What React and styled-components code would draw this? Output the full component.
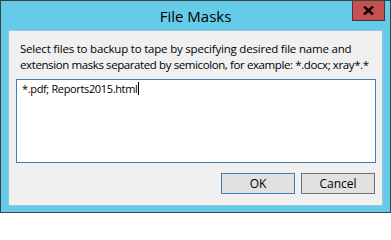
import React from 'react';
import styled, { createGlobalStyle } from 'styled-components';

const GlobalStyle = createGlobalStyle`
  html, body {
    margin: 0;
    padding: 0;
    background: #ffffff;
  }
  body {
    font-family: "Open Sans", "Noto Sans", sans-serif;
  }
`;

const Window = styled.div`
  box-sizing: border-box;
  width: 391px;
  height: 213px;
  background: #65cbe9;
  border: 1px solid #3d4446;
  display: flex;
  flex-direction: column;
  padding: 0 7px 6px 7px;
  overflow: hidden;
`;

const TitleBar = styled.div`
  position: relative;
  height: 29px;
  display: flex;
  align-items: center;
  justify-content: center;
  flex-shrink: 0;
`;

const Title = styled.span`
  font-size: 15px;
  color: #000;
  padding-top: 1px;
`;

const CloseButton = styled.div`
  position: absolute;
  top: -1px;
  right: -2px;
  width: 31px;
  height: 20px;
  background: #c75050;
  border: 1px solid #4a3535;
  border-top: none;
  display: flex;
  align-items: center;
  justify-content: center;
`;

const Panel = styled.div`
  flex: 1;
  min-height: 0;
  background: #f0f0f0;
  border: 1px solid #9ac4dc;
  display: flex;
  flex-direction: column;
  padding: 0 6px 11px 7px;
`;

const Prompt = styled.div`
  margin-top: 10px;
  padding-left: 4px;
  display: flex;
  flex-direction: column;
`;

const PromptLine = styled.span`
  font-size: 11.5px;
  line-height: 16px;
  color: #000;
  white-space: nowrap;
  letter-spacing: ${p => p.$tracking}px;
`;

const MaskInput = styled.div`
  box-sizing: border-box;
  margin-top: 6px;
  height: 84px;
  flex-shrink: 0;
  background: #fff;
  border: 1px solid #3f7fb3;
  padding: 1px 5px;
  font-size: 11px;
  line-height: 16px;
  color: #000;
  letter-spacing: -0.35px;
`;

const Caret = styled.span`
  display: inline-block;
  width: 1px;
  height: 13px;
  background: #000;
  vertical-align: -2px;
  margin-left: 1px;
`;

const ButtonRow = styled.div`
  display: flex;
  justify-content: flex-end;
  gap: 6px;
  margin-top: auto;
  padding-right: 1px;
`;

const Button = styled.div`
  box-sizing: border-box;
  width: 74px;
  height: 21px;
  background: #e1e1e1;
  border: 1px solid ${p => (p.$primary ? '#3c7fb1' : '#707070')};
  display: flex;
  align-items: center;
  justify-content: center;
  font-size: 12px;
  color: #000;
`;

export default function App() {
  return (
    <>
      <GlobalStyle />
      <Window>
        <TitleBar>
          <Title>File Masks</Title>
          <CloseButton>
            <svg width="11" height="9" viewBox="0 0 11 9">
              <path d="M1 0.5 L10 8.5 M10 0.5 L1 8.5" stroke="#000" strokeWidth="2.4" />
            </svg>
          </CloseButton>
        </TitleBar>
        <Panel>
          <Prompt>
            <PromptLine $tracking={-0.2}>
              Select files to backup to tape by specifying desired file name and
            </PromptLine>
            <PromptLine $tracking={-0.4}>
              extension masks separated by semicolon, for example: *.docx; xray*.*
            </PromptLine>
          </Prompt>
          <MaskInput>
            *.pdf; Reports2015.html<Caret />
          </MaskInput>
          <ButtonRow>
            <Button $primary>OK</Button>
            <Button>Cancel</Button>
          </ButtonRow>
        </Panel>
      </Window>
    </>
  );
}
